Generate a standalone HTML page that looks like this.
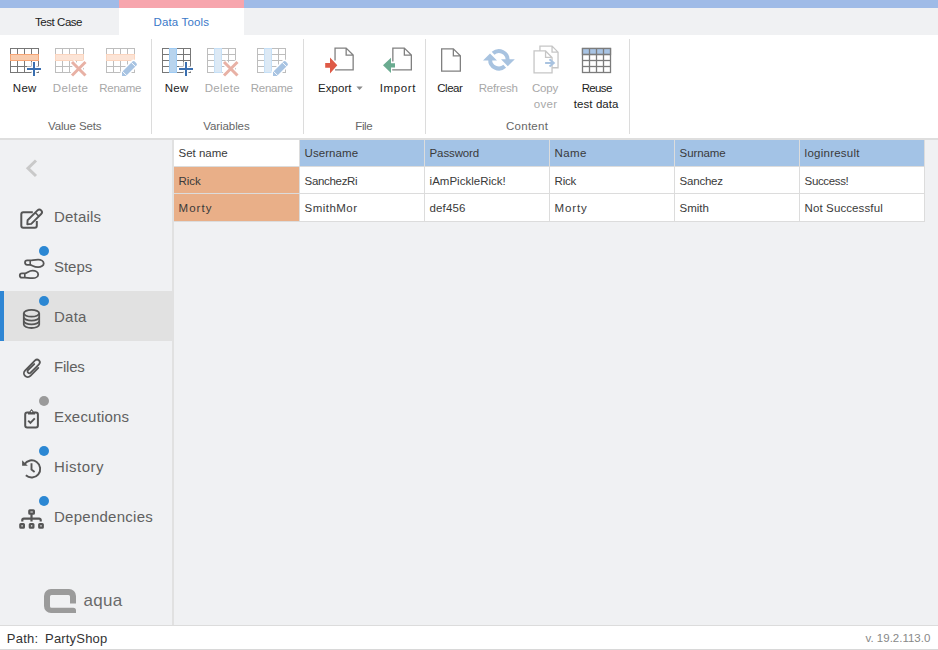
<!DOCTYPE html>
<html><head><meta charset="utf-8"><style>
html,body{margin:0;padding:0;width:938px;height:650px;overflow:hidden;background:#f0f1f3;font-family:"Liberation Sans", sans-serif;}
.a{position:absolute}
.t{position:absolute;white-space:pre;font-family:"Liberation Sans", sans-serif}
</style></head><body>
<!-- top bar -->
<div class="a" style="left:0;top:0;width:938px;height:8px;background:#9fbbe7"></div>
<div class="a" style="left:119px;top:0;width:125px;height:8px;background:#f7a5ad"></div>
<!-- tab row -->
<div class="a" style="left:0;top:8px;width:938px;height:27px;background:#f0f1f3"></div>
<div class="a" style="left:119px;top:8px;width:125px;height:27px;background:#fff"></div>
<!-- ribbon -->
<div class="a" style="left:0;top:35px;width:938px;height:103px;background:#fff"></div>
<div class="a" style="left:0;top:138px;width:938px;height:2px;background:#dedede"></div>
<div class="a" style="left:151px;top:39px;width:1px;height:95px;background:#dcdcdc"></div>
<div class="a" style="left:303px;top:39px;width:1px;height:95px;background:#dcdcdc"></div>
<div class="a" style="left:425px;top:39px;width:1px;height:95px;background:#dcdcdc"></div>
<div class="a" style="left:629px;top:39px;width:1px;height:95px;background:#dcdcdc"></div>
<!-- sidebar -->
<div class="a" style="left:172px;top:140px;width:2px;height:485px;background:#e1e1e1"></div>
<div class="a" style="left:0;top:291px;width:172px;height:50px;background:#e1e1e1"></div>
<div class="a" style="left:0;top:291px;width:4px;height:50px;background:#2f86d4"></div>
<!-- dots -->
<div class="a" style="left:39px;top:246px;width:10px;height:10px;border-radius:50%;background:#2b87d3"></div>
<div class="a" style="left:39px;top:296px;width:10px;height:10px;border-radius:50%;background:#2b87d3"></div>
<div class="a" style="left:39px;top:396px;width:10px;height:10px;border-radius:50%;background:#9a9a9a"></div>
<div class="a" style="left:39px;top:446px;width:10px;height:10px;border-radius:50%;background:#2b87d3"></div>
<div class="a" style="left:39px;top:496px;width:10px;height:10px;border-radius:50%;background:#2b87d3"></div>
<!-- status bar -->
<div class="a" style="left:0;top:625px;width:938px;height:1px;background:#dcdcdc"></div>
<div class="a" style="left:0;top:626px;width:938px;height:23px;background:#fff"></div>
<div class="a" style="left:0;top:649px;width:938px;height:1px;background:#d8d8d8"></div>
<!-- table -->
<div class="a" style="left:174px;top:140px;width:751px;height:82px;background:#dcdcdc"></div>
<div class="a" style="left:174px;top:140px;width:125px;height:26px;background:#fff"></div>
<div class="a" style="left:300px;top:140px;width:624px;height:26px;background:#a3c3e6"></div>
<div class="a" style="left:174px;top:167px;width:125px;height:26px;background:#e9af88"></div>
<div class="a" style="left:174px;top:194px;width:125px;height:27px;background:#e9af88"></div>
<div class="a" style="left:300px;top:167px;width:624px;height:26px;background:#fff"></div>
<div class="a" style="left:300px;top:194px;width:624px;height:27px;background:#fff"></div>
<div class="a" style="left:424px;top:140px;width:1px;height:81px;background:#dcdcdc"></div>
<div class="a" style="left:549px;top:140px;width:1px;height:81px;background:#dcdcdc"></div>
<div class="a" style="left:674px;top:140px;width:1px;height:81px;background:#dcdcdc"></div>
<div class="a" style="left:799px;top:140px;width:1px;height:81px;background:#dcdcdc"></div>

<svg class="a" style="left:0;top:0" width="938" height="650" viewBox="0 0 938 650"><g stroke="#777" stroke-width="1" fill="#fff"><rect x="10.5" y="48.5" width="28" height="24"/><line x1="17.5" y1="48.5" x2="17.5" y2="72.5"/><line x1="24.5" y1="48.5" x2="24.5" y2="72.5"/><line x1="31.5" y1="48.5" x2="31.5" y2="72.5"/><line x1="10.5" y1="54.5" x2="38.5" y2="54.5"/><line x1="10.5" y1="60.5" x2="38.5" y2="60.5"/><line x1="10.5" y1="66.5" x2="38.5" y2="66.5"/></g><rect x="10.5" y="54.5" width="28" height="6" fill="#f8ccae" stroke="#f6a676" stroke-width="1"/><path d="M27 69H41M34 62V76" stroke="#fff" stroke-width="5"/><path d="M27 69H41M34 62V76" stroke="#3a6fb0" stroke-width="2"/><g stroke="#bdbdbd" stroke-width="1" fill="#fff"><rect x="55.5" y="48.5" width="28" height="24"/><line x1="62.5" y1="48.5" x2="62.5" y2="72.5"/><line x1="69.5" y1="48.5" x2="69.5" y2="72.5"/><line x1="76.5" y1="48.5" x2="76.5" y2="72.5"/><line x1="55.5" y1="54.5" x2="83.5" y2="54.5"/><line x1="55.5" y1="60.5" x2="83.5" y2="60.5"/><line x1="55.5" y1="66.5" x2="83.5" y2="66.5"/></g><rect x="55.5" y="54.5" width="28" height="6" fill="#fce4d6" stroke="#fbd5bf" stroke-width="1"/><path d="M72 62L85.5 75.5M85.5 62L72 75.5" stroke="#fff" stroke-width="6"/><path d="M72 62L85.5 75.5M85.5 62L72 75.5" stroke="#e8b1a5" stroke-width="3"/><g stroke="#bdbdbd" stroke-width="1" fill="#fff"><rect x="106.5" y="48.5" width="28" height="24"/><line x1="113.5" y1="48.5" x2="113.5" y2="72.5"/><line x1="120.5" y1="48.5" x2="120.5" y2="72.5"/><line x1="127.5" y1="48.5" x2="127.5" y2="72.5"/><line x1="106.5" y1="54.5" x2="134.5" y2="54.5"/><line x1="106.5" y1="60.5" x2="134.5" y2="60.5"/><line x1="106.5" y1="66.5" x2="134.5" y2="66.5"/></g><rect x="106.5" y="54.5" width="28" height="6" fill="#fce4d6" stroke="#fbd5bf" stroke-width="1"/><g transform="translate(122,76) rotate(-45)"><path d="M0 0L2.8 -2.8L17.6 -2.8Q19.2 -2.8 19.2 -1.2V1.2Q19.2 2.8 17.6 2.8L2.8 2.8Z" fill="#fff" stroke="#fff" stroke-width="3"/><path d="M0 0L2.8 -2.8L17.6 -2.8Q19.2 -2.8 19.2 -1.2V1.2Q19.2 2.8 17.6 2.8L2.8 2.8Z" fill="#a7c3e2"/><path d="M3.6 -3V3M16.2 -3V3" stroke="#fff" stroke-width="0.9"/></g><g stroke="#777" stroke-width="1" fill="#fff"><rect x="162.5" y="48.5" width="28" height="24"/><line x1="169.5" y1="48.5" x2="169.5" y2="72.5"/><line x1="176.5" y1="48.5" x2="176.5" y2="72.5"/><line x1="183.5" y1="48.5" x2="183.5" y2="72.5"/><line x1="162.5" y1="54.5" x2="190.5" y2="54.5"/><line x1="162.5" y1="60.5" x2="190.5" y2="60.5"/><line x1="162.5" y1="66.5" x2="190.5" y2="66.5"/></g><rect x="169.5" y="48.5" width="7" height="24" fill="#b8d4ee" stroke="#9fcbf3" stroke-width="1"/><path d="M179 69H193M186 62V76" stroke="#fff" stroke-width="5"/><path d="M179 69H193M186 62V76" stroke="#3a6fb0" stroke-width="2"/><g stroke="#bdbdbd" stroke-width="1" fill="#fff"><rect x="207.5" y="48.5" width="28" height="24"/><line x1="214.5" y1="48.5" x2="214.5" y2="72.5"/><line x1="221.5" y1="48.5" x2="221.5" y2="72.5"/><line x1="228.5" y1="48.5" x2="228.5" y2="72.5"/><line x1="207.5" y1="54.5" x2="235.5" y2="54.5"/><line x1="207.5" y1="60.5" x2="235.5" y2="60.5"/><line x1="207.5" y1="66.5" x2="235.5" y2="66.5"/></g><rect x="214.5" y="48.5" width="7" height="24" fill="#dce9f5" stroke="#c6e0f7" stroke-width="1"/><path d="M224 62L237.5 75.5M237.5 62L224 75.5" stroke="#fff" stroke-width="6"/><path d="M224 62L237.5 75.5M237.5 62L224 75.5" stroke="#e8b1a5" stroke-width="3"/><g stroke="#bdbdbd" stroke-width="1" fill="#fff"><rect x="257.5" y="48.5" width="28" height="24"/><line x1="264.5" y1="48.5" x2="264.5" y2="72.5"/><line x1="271.5" y1="48.5" x2="271.5" y2="72.5"/><line x1="278.5" y1="48.5" x2="278.5" y2="72.5"/><line x1="257.5" y1="54.5" x2="285.5" y2="54.5"/><line x1="257.5" y1="60.5" x2="285.5" y2="60.5"/><line x1="257.5" y1="66.5" x2="285.5" y2="66.5"/></g><rect x="264.5" y="48.5" width="7" height="24" fill="#dce9f5" stroke="#c6e0f7" stroke-width="1"/><g transform="translate(273,76) rotate(-45)"><path d="M0 0L2.8 -2.8L17.6 -2.8Q19.2 -2.8 19.2 -1.2V1.2Q19.2 2.8 17.6 2.8L2.8 2.8Z" fill="#fff" stroke="#fff" stroke-width="3"/><path d="M0 0L2.8 -2.8L17.6 -2.8Q19.2 -2.8 19.2 -1.2V1.2Q19.2 2.8 17.6 2.8L2.8 2.8Z" fill="#a7c3e2"/><path d="M3.6 -3V3M16.2 -3V3" stroke="#fff" stroke-width="0.9"/></g><path d="M335.04999999999995 48.05H346.15000000000003L353.15000000000003 55.05V69.94999999999999H335.04999999999995Z" fill="#fff"/><path d="M335.04999999999995 60.6V48.05H346.15000000000003L353.15000000000003 55.05V69.94999999999999H335.04999999999995 M346.15000000000003 48.05V55.05H353.15000000000003" fill="none" stroke="#808080" stroke-width="1.3"/><path d="M325.2 63.1H330V57.5L337.3 65.3L330 73.4V67.8H325.2Z" fill="#de5a46"/><path d="M392.84999999999997 48.05H404.35L411.35 55.05V69.94999999999999H392.84999999999997Z" fill="#fff"/><path d="M392.84999999999997 61.5V48.05H404.35L411.35 55.05V69.94999999999999H392.84999999999997V69.2 M404.35 48.05V55.05H411.35" fill="none" stroke="#808080" stroke-width="1.3"/><path d="M395 63.2H391V57.8L383 65.3L391 73V67.6H395Z" fill="#6aab90"/><path d="M441.65 48.85H453.35L460.35 55.85V71.14999999999999H441.65Z M453.35 48.85V55.85H460.35" fill="#fff" stroke="#808080" stroke-width="1.3" stroke-linejoin="miter"/><path d="M493.08 53.33A8.7 8.7 0 0 1 507.60 60.30" stroke="#a8c3e0" stroke-width="4" fill="none"/><path d="M501 59.3H514.8L507.8 66.3Z" fill="#a8c3e0"/><path d="M504.72 66.27A8.7 8.7 0 0 1 490.20 59.30" stroke="#a8c3e0" stroke-width="4" fill="none"/><path d="M483 60.5H497L490 53.5Z" fill="#a8c3e0"/><path d="M539.9499999999999 46.15H552.0500000000001L558.0500000000001 52.15V67.75H539.9499999999999Z M552.0500000000001 46.15V52.15H558.0500000000001" fill="#fff" stroke="#c6c6c6" stroke-width="1.3" stroke-linejoin="miter"/><path d="M534.05 50.949999999999996H545.5500000000001L552.0500000000001 57.449999999999996V72.85H534.05Z M545.5500000000001 50.949999999999996V57.449999999999996H552.0500000000001" fill="#fff" stroke="#c6c6c6" stroke-width="1.3" stroke-linejoin="miter"/><path d="M545.1 62.9H554M549.5 59.2L553.8 62.9L549.5 66.6" stroke="#a9c3e0" stroke-width="2" fill="none"/><g stroke="#7c7c7c" stroke-width="1.3" fill="#fff"><rect x="582.5" y="48.5" width="28" height="24"/><rect x="582.5" y="48.5" width="28" height="6" fill="#a8c4e4"/><line x1="589.5" y1="48.5" x2="589.5" y2="72.5"/><line x1="582.5" y1="54.5" x2="610.5" y2="54.5"/><line x1="596.5" y1="48.5" x2="596.5" y2="72.5"/><line x1="582.5" y1="60.5" x2="610.5" y2="60.5"/><line x1="603.5" y1="48.5" x2="603.5" y2="72.5"/><line x1="582.5" y1="66.5" x2="610.5" y2="66.5"/></g><path d="M356.4 86.6H362.7L359.55 90Z" fill="#8a8a8a"/><path d="M36 160.5L28 168.2L36 176" stroke="#c9c9c9" stroke-width="3" fill="none"/><path d="M32.8 212.2H23.3A2 2 0 0 0 21.3 214.2V225.8A2 2 0 0 0 23.3 227.8H34.8A2 2 0 0 0 36.8 225.8V220.9" stroke="#555" stroke-width="2" fill="none"/><g transform="translate(27.3,224.2) rotate(-45)"><path d="M0 0L3 -2.6H17A2.6 2.6 0 0 1 17 2.6H3Z" stroke="#555" stroke-width="1.9" fill="none" stroke-linejoin="round"/><path d="M13.8 -2.6V2.6" stroke="#555" stroke-width="1.6"/></g><path transform="translate(0.6,0)" d="M29.6 260.4H26.6A2.2 2.2 0 0 0 26.6 264.8H29.6C32 265.5 33.5 267.2 37.5 267.2A5.6 3.8 0 0 0 37.5 259.6C33.5 259.6 32 260.4 29.6 260.4Z" stroke="#555" stroke-width="1.8" fill="none"/><path transform="translate(0.6,0)" d="M29.6 260.4V264.8" stroke="#555" stroke-width="1.6"/><path transform="translate(0.6,0)" d="M24.2 273.3H21.4A2.2 2.2 0 0 0 21.4 277.7H24.2C26.6 277.7 28 278.2 32 278.2A5.6 3.8 0 0 0 32 270.6C28 270.6 26.6 273.3 24.2 273.3Z" stroke="#555" stroke-width="1.8" fill="none"/><path transform="translate(0.6,0)" d="M24.2 273.3V277.7" stroke="#555" stroke-width="1.6"/><g stroke="#555" stroke-width="1.8" fill="none"><ellipse cx="31.5" cy="313.3" rx="7.7" ry="3.4"/><path d="M23.8 313.3V324.6A7.7 3.4 0 0 0 39.2 324.6V313.3"/><path d="M23.8 317.2A7.7 3.4 0 0 0 39.2 317.2M23.8 320.9A7.7 3.4 0 0 0 39.2 320.9"/></g><path transform="matrix(0.7071,-0.7071,0.7071,0.7071,0,0)" d="M-233.1 287.3L-244.3 287.3A3.8 3.8 0 0 1 -244.3 279.7L-230.1 279.7A2.75 2.75 0 0 1 -230.1 285.2L-241.9 285.2A1.8 1.8 0 0 1 -241.9 281.6L-233.2 281.6" stroke="#555" stroke-width="1.8" fill="none" stroke-linecap="round"/><path d="M28 412.5H27.2A2 2 0 0 0 25.2 414.5V425.6A2 2 0 0 0 27.2 427.6H35.9A2 2 0 0 0 37.9 425.6V414.5A2 2 0 0 0 35.9 412.5H35" stroke="#555" stroke-width="2" fill="none"/><path d="M28 414.6V411.5H29.5L31.55 409L33.6 411.5H35.1V414.6Z" fill="#555"/><circle cx="31.55" cy="411.5" r="0.8" fill="#f0f1f3"/><path d="M28.2 420.6L30.4 422.9L34.8 418.4" stroke="#555" stroke-width="1.9" fill="none"/><path d="M24.39 464.22A8.6 8.6 0 1 1 25.85 475.29" stroke="#555" stroke-width="1.9" fill="none"/><path d="M22.1 460.2V465.8H27.8Z" fill="#555"/><path d="M31.5 463.3V469.6L34.6 471.9" stroke="#555" stroke-width="1.9" fill="none"/><g stroke="#555" stroke-width="2.2" fill="none"><rect x="29.3" y="510.3" width="4.6" height="3.4" rx="0.5"/><path d="M31.5 514V518.6M22.3 521.6V520.1A1.5 1.5 0 0 1 23.8 518.6H39.2A1.5 1.5 0 0 1 40.7 520.1V521.6M31.5 518.6V521.6"/><rect x="20.3" y="524.1" width="3.6" height="3.6" rx="0.5"/><rect x="29.8" y="524.1" width="3.6" height="3.6" rx="0.5"/><rect x="39.2" y="524.1" width="3.6" height="3.6" rx="0.5"/></g><path d="M76 603.5V596A7 7 0 0 0 69 589H51A7 7 0 0 0 44 596V606A7 7 0 0 0 51 613H76V610.5A2.8 2.8 0 0 0 73.2 607.7H51.5A1.5 1.5 0 0 1 50 606.2V596.5A1.5 1.5 0 0 1 51.5 595H68.5A1.5 1.5 0 0 1 70 596.5V603.5Z" fill="#9b9b9b"/></svg>
<div class="t" style="left:34.99px;top:17.22px;font-size:11.5px;line-height:11.5px;color:#222;letter-spacing:-0.450px">Test Case</div><div class="t" style="left:153.59px;top:17.22px;font-size:11.5px;line-height:11.5px;color:#3a78c8;letter-spacing:0.133px">Data Tools</div><div class="t" style="left:12.79px;top:83.12px;font-size:11.5px;line-height:11.5px;color:#222;letter-spacing:0.300px">New</div><div class="t" style="left:52.80px;top:83.12px;font-size:11.5px;line-height:11.5px;color:#a8a8a8;letter-spacing:0.360px">Delete</div><div class="t" style="left:99.19px;top:83.12px;font-size:11.5px;line-height:11.5px;color:#a8a8a8;letter-spacing:-0.240px">Rename</div><div class="t" style="left:164.69px;top:83.12px;font-size:11.5px;line-height:11.5px;color:#222;letter-spacing:0.300px">New</div><div class="t" style="left:204.69px;top:83.12px;font-size:11.5px;line-height:11.5px;color:#a8a8a8;letter-spacing:0.360px">Delete</div><div class="t" style="left:250.69px;top:83.12px;font-size:11.5px;line-height:11.5px;color:#a8a8a8;letter-spacing:-0.240px">Rename</div><div class="t" style="left:317.89px;top:83.12px;font-size:11.5px;line-height:11.5px;color:#222;letter-spacing:0.080px">Export</div><div class="t" style="left:379.80px;top:83.12px;font-size:11.5px;line-height:11.5px;color:#222;letter-spacing:0.600px">Import</div><div class="t" style="left:437.30px;top:83.12px;font-size:11.5px;line-height:11.5px;color:#222;letter-spacing:-0.500px">Clear</div><div class="t" style="left:478.69px;top:83.12px;font-size:11.5px;line-height:11.5px;color:#a8a8a8;letter-spacing:-0.167px">Refresh</div><div class="t" style="left:532.00px;top:83.12px;font-size:11.5px;line-height:11.5px;color:#a8a8a8;letter-spacing:-0.200px">Copy</div><div class="t" style="left:533.70px;top:99.12px;font-size:11.5px;line-height:11.5px;color:#a8a8a8;letter-spacing:0.333px">over</div><div class="t" style="left:581.70px;top:83.12px;font-size:11.5px;line-height:11.5px;color:#222;letter-spacing:-0.650px">Reuse</div><div class="t" style="left:573.80px;top:99.12px;font-size:11.5px;line-height:11.5px;color:#222;letter-spacing:0.075px">test data</div><div class="t" style="left:47.99px;top:120.92px;font-size:11.5px;line-height:11.5px;color:#666;letter-spacing:-0.133px">Value Sets</div><div class="t" style="left:203.19px;top:120.92px;font-size:11.5px;line-height:11.5px;color:#666;letter-spacing:-0.075px">Variables</div><div class="t" style="left:355.19px;top:120.92px;font-size:11.5px;line-height:11.5px;color:#666;letter-spacing:-0.333px">File</div><div class="t" style="left:506.00px;top:120.92px;font-size:11.5px;line-height:11.5px;color:#666;letter-spacing:0.267px">Content</div><div class="t" style="left:53.95px;top:209.30px;font-size:15px;line-height:15px;color:#616161;letter-spacing:0.200px">Details</div><div class="t" style="left:53.95px;top:259.30px;font-size:15px;line-height:15px;color:#616161;letter-spacing:0.000px">Steps</div><div class="t" style="left:53.95px;top:309.30px;font-size:15px;line-height:15px;color:#616161;letter-spacing:0.267px">Data</div><div class="t" style="left:53.95px;top:359.30px;font-size:15px;line-height:15px;color:#616161;letter-spacing:-0.200px">Files</div><div class="t" style="left:53.95px;top:409.30px;font-size:15px;line-height:15px;color:#616161;letter-spacing:0.200px">Executions</div><div class="t" style="left:53.95px;top:459.30px;font-size:15px;line-height:15px;color:#616161;letter-spacing:0.500px">History</div><div class="t" style="left:53.95px;top:509.30px;font-size:15px;line-height:15px;color:#616161;letter-spacing:0.273px">Dependencies</div><div class="t" style="left:83.61px;top:592.21px;font-size:17px;line-height:17px;color:#6a6a6a;letter-spacing:0.267px">aqua</div><div class="t" style="left:6.79px;top:631.50px;font-size:13px;line-height:13px;color:#333;letter-spacing:0.225px">Path:</div><div class="t" style="left:45.09px;top:631.50px;font-size:13px;line-height:13px;color:#333;letter-spacing:0.175px">PartyShop</div><div class="t" style="left:865.60px;top:632.72px;font-size:11.5px;line-height:11.5px;color:#888;letter-spacing:-0.008px">v. 19.2.113.0</div><div class="t" style="left:178.59px;top:148.42px;font-size:11.5px;line-height:11.5px;color:#3a3a3a;letter-spacing:-0.014px">Set name</div><div class="t" style="left:304.59px;top:148.42px;font-size:11.5px;line-height:11.5px;color:#3a3a3a;letter-spacing:0.057px">Username</div><div class="t" style="left:429.59px;top:148.42px;font-size:11.5px;line-height:11.5px;color:#3a3a3a;letter-spacing:-0.129px">Password</div><div class="t" style="left:554.60px;top:148.42px;font-size:11.5px;line-height:11.5px;color:#3a3a3a;letter-spacing:0.367px">Name</div><div class="t" style="left:679.60px;top:148.42px;font-size:11.5px;line-height:11.5px;color:#3a3a3a;letter-spacing:-0.117px">Surname</div><div class="t" style="left:804.60px;top:148.42px;font-size:11.5px;line-height:11.5px;color:#3a3a3a;letter-spacing:0.250px">loginresult</div><div class="t" style="left:178.59px;top:175.62px;font-size:11.5px;line-height:11.5px;color:#3a3a3a;letter-spacing:-0.033px">Rick</div><div class="t" style="left:304.59px;top:175.62px;font-size:11.5px;line-height:11.5px;color:#3a3a3a;letter-spacing:-0.325px">SanchezRi</div><div class="t" style="left:429.59px;top:175.62px;font-size:11.5px;line-height:11.5px;color:#3a3a3a;letter-spacing:0.015px">iAmPickleRick!</div><div class="t" style="left:554.60px;top:175.62px;font-size:11.5px;line-height:11.5px;color:#3a3a3a;letter-spacing:-0.200px">Rick</div><div class="t" style="left:679.60px;top:175.62px;font-size:11.5px;line-height:11.5px;color:#3a3a3a;letter-spacing:-0.217px">Sanchez</div><div class="t" style="left:804.60px;top:175.62px;font-size:11.5px;line-height:11.5px;color:#3a3a3a;letter-spacing:-0.357px">Success!</div><div class="t" style="left:178.59px;top:202.62px;font-size:11.5px;line-height:11.5px;color:#3a3a3a;letter-spacing:1.025px">Morty</div><div class="t" style="left:304.59px;top:202.62px;font-size:11.5px;line-height:11.5px;color:#3a3a3a;letter-spacing:0.457px">SmithMor</div><div class="t" style="left:429.59px;top:202.62px;font-size:11.5px;line-height:11.5px;color:#3a3a3a;letter-spacing:0.120px">def456</div><div class="t" style="left:554.60px;top:202.62px;font-size:11.5px;line-height:11.5px;color:#3a3a3a;letter-spacing:0.875px">Morty</div><div class="t" style="left:679.60px;top:202.62px;font-size:11.5px;line-height:11.5px;color:#3a3a3a;letter-spacing:-0.025px">Smith</div><div class="t" style="left:804.60px;top:202.62px;font-size:11.5px;line-height:11.5px;color:#3a3a3a;letter-spacing:0.108px">Not Successful</div>
</body></html>
